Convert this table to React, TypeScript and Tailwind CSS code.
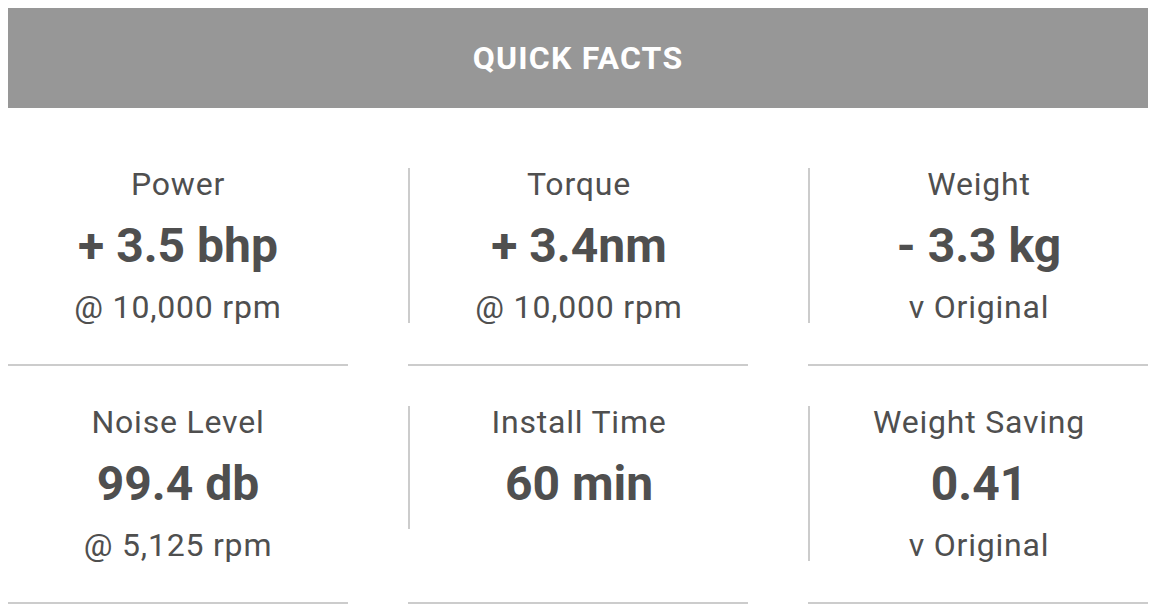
type Fact = {
  label: string;
  value: string;
  note?: string;
};

const facts: Fact[] = [
  { label: "Power", value: "+ 3.5 bhp", note: "@ 10,000 rpm" },
  { label: "Torque", value: "+ 3.4nm", note: "@ 10,000 rpm" },
  { label: "Weight", value: "- 3.3 kg", note: "v Original" },
  { label: "Noise Level", value: "99.4 db", note: "@ 5,125 rpm" },
  { label: "Install Time", value: "60 min" },
  { label: "Weight Saving", value: "0.41", note: "v Original" },
];

const FactCell: React.FC<{ fact: Fact; first: boolean; top: boolean }> = ({ fact, first, top }) => {
  return (
    <div className={`${top ? "pt-[60px]" : "pt-10"} pb-[41px] border-b-2 border-[#cccccc]`}>
      <div
        className={`flex flex-col gap-[21px] items-center text-center text-[#4f4f4f] ${
          first ? "" : "border-l-2 border-[#cccccc]"
        }`}
      >
        <div className="text-[32px] leading-[32px] tracking-[0.8px]">{fact.label}</div>
        <div className="text-[48px] leading-[49px] font-bold">{fact.value}</div>
        <div className="text-[32px] leading-[32px] tracking-[0.8px]">{fact.note}</div>
      </div>
    </div>
  );
};

export default function App() {
  return (
    <div className="bg-white p-2 h-[616px]" style={{ fontFamily: "Roboto, 'Liberation Sans', sans-serif" }}>
      <div className="w-[1140px]">
        <div className="h-[100px] bg-[#979797] flex items-center justify-center">
          <h2 className="text-white font-bold text-[32px] tracking-[1.2px]">QUICK FACTS</h2>
        </div>
        <div className="grid grid-cols-3 gap-x-[60px]">
          {facts.map((fact, i) => (
            <FactCell key={fact.label} fact={fact} first={i % 3 === 0} top={i < 3} />
          ))}
        </div>
      </div>
    </div>
  );
}
